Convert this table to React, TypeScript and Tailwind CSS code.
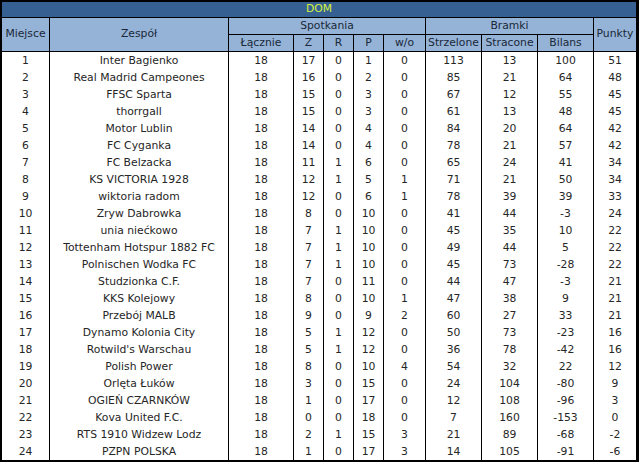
import React from 'react';

type Row = [number, string, number, number, number, number, number, number, number, number, number];

const rows: Row[] = [
    [1, 'Inter Bagienko', 18, 17, 0, 1, 0, 113, 13, 100, 51],
    [2, 'Real Madrid Campeones', 18, 16, 0, 2, 0, 85, 21, 64, 48],
    [3, 'FFSC Sparta', 18, 15, 0, 3, 0, 67, 12, 55, 45],
    [4, 'thorrgall', 18, 15, 0, 3, 0, 61, 13, 48, 45],
    [5, 'Motor Lublin', 18, 14, 0, 4, 0, 84, 20, 64, 42],
    [6, 'FC Cyganka', 18, 14, 0, 4, 0, 78, 21, 57, 42],
    [7, 'FC Belzacka', 18, 11, 1, 6, 0, 65, 24, 41, 34],
    [8, 'KS VICTORIA 1928', 18, 12, 1, 5, 1, 71, 21, 50, 34],
    [9, 'wiktoria radom', 18, 12, 0, 6, 1, 78, 39, 39, 33],
    [10, 'Zryw Dabrowka', 18, 8, 0, 10, 0, 41, 44, -3, 24],
    [11, 'unia niećkowo', 18, 7, 1, 10, 0, 45, 35, 10, 22],
    [12, 'Tottenham Hotspur 1882 FC', 18, 7, 1, 10, 0, 49, 44, 5, 22],
    [13, 'Polnischen Wodka FC', 18, 7, 1, 10, 0, 45, 73, -28, 22],
    [14, 'Studzionka C.F.', 18, 7, 0, 11, 0, 44, 47, -3, 21],
    [15, 'KKS Kolejowy', 18, 8, 0, 10, 1, 47, 38, 9, 21],
    [16, 'Przebój MALB', 18, 9, 0, 9, 2, 60, 27, 33, 21],
    [17, 'Dynamo Kolonia City', 18, 5, 1, 12, 0, 50, 73, -23, 16],
    [18, "Rotwild's Warschau", 18, 5, 1, 12, 0, 36, 78, -42, 16],
    [19, 'Polish Power', 18, 8, 0, 10, 4, 54, 32, 22, 12],
    [20, 'Orlęta Łuków', 18, 3, 0, 15, 0, 24, 104, -80, 9],
    [21, 'OGIEŃ CZARNKÓW', 18, 1, 0, 17, 0, 12, 108, -96, 3],
    [22, 'Kova United F.C.', 18, 0, 0, 18, 0, 7, 160, -153, 0],
    [23, 'RTS 1910 Widzew Lodz', 18, 2, 1, 15, 3, 21, 89, -68, -2],
    [24, 'PZPN POLSKA', 18, 1, 0, 17, 3, 14, 105, -91, -6],
];

const cols = 'grid-cols-[47px_178px_64px_29px_29px_29px_41px_55px_55px_55px_42px]';

function Head({ children, className = '' }: { children: React.ReactNode; className?: string }) {
    return (
        <div className={`bg-[#95b3d7] text-[#1a2838] flex items-center justify-center whitespace-nowrap ${className}`}>
            {children}
        </div>
    );
}

export default function App() {
    return (
        <div
            className="w-[639px] h-[462px] bg-black pl-[2px] pt-[2px] pr-[3px] pb-[2px] flex flex-col gap-px text-[10.8px] leading-none"
            style={{ fontFamily: '"DejaVu Sans", Verdana, sans-serif' }}
        >
            <div className="h-[15px] bg-[#366092] text-[#d4f23e] flex items-center justify-center">DOM</div>

            <div className={`grid ${cols} grid-rows-[16px_16px] gap-px`}>
                <Head className="row-span-2">Miejsce</Head>
                <Head className="row-span-2">Zespół</Head>
                <Head className="col-span-5">Spotkania</Head>
                <Head className="col-span-3">Bramki</Head>
                <Head className="row-span-2">Punkty</Head>
                <Head>Łącznie</Head>
                <Head>Z</Head>
                <Head>R</Head>
                <Head>P</Head>
                <Head>w/o</Head>
                <Head>Strzelone</Head>
                <Head>Stracone</Head>
                <Head>Bilans</Head>
            </div>

            <div className={`grid ${cols} gap-x-px auto-rows-[17px]`}>
                {rows.map((r) =>
                    r.map((v, i) => (
                        <div
                            key={`${r[0]}-${i}`}
                            className="bg-white text-[#262626] flex items-center justify-center whitespace-nowrap pt-px"
                        >
                            {v}
                        </div>
                    ))
                )}
            </div>
        </div>
    );
}
